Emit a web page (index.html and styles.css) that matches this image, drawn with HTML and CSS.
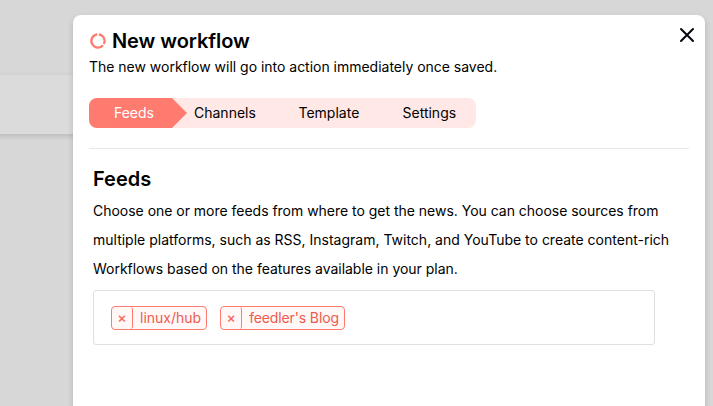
FILE: index.html
```html
<!DOCTYPE html>
<html lang="en">
<head>
<meta charset="utf-8">
<title>New workflow</title>
<link rel="stylesheet" href="styles.css">
</head>
<body>
<div class="backdrop-card"></div>
<main class="modal">
  <button class="close" aria-label="Close"><svg width="16" height="16" viewBox="0 0 16 16"><path d="M2 2l12 12M14 2L2 14"/></svg></button>
  <header class="header">
    <h1 class="title">
      <svg class="ring" width="18" height="18" viewBox="0 0 18 18"><path d="M9.8 2.4A6.6 6.6 0 0 1 14.9 11.9M14 13.2A6.6 6.6 0 1 1 8.2 2.4"/></svg>
      <span>New workflow</span>
    </h1>
    <p class="subtitle">The new workflow will go into action immediately once saved.</p>
  </header>
  <nav class="steps">
    <div class="step step-active">Feeds</div>
    <div class="step step-channels">Channels</div>
    <div class="step step-template">Template</div>
    <div class="step step-settings">Settings</div>
  </nav>
  <hr class="divider">
  <section class="feeds">
    <h2 class="section-title">Feeds</h2>
    <p class="description"><span class="snug">Choose one or more feeds from where to get the news. You can choose sources from</span><br>multiple platforms, such as RSS, Instagram, Twitch, and YouTube to create content-rich<br><span class="snug">Workflows based on the features available in your plan.</span></p>
    <div class="picker">
      <div class="tag"><span class="remove">×</span><span class="label">linux/hub</span></div>
      <div class="tag"><span class="remove">×</span><span class="label label-blog">feedler's Blog</span></div>
    </div>
  </section>
</main>
</body>
</html>
```
FILE: styles.css
```css
* { box-sizing: border-box; }
body {
  margin: 0;
  height: 406px;
  overflow: hidden;
  position: relative;
  background: #d7d7d7;
  color: #000;
  font: 14px/20px Inter, "Liberation Sans", sans-serif;
}
h1, h2, p { margin: 0; }
.backdrop-card {
  position: absolute;
  left: -10px;
  top: 75px;
  width: 100px;
  height: 59px;
  background: #dbdbdb;
  box-shadow: 0 2px 5px rgba(0, 0, 0, .14);
}
.modal {
  position: relative;
  width: 632px;
  height: 391px;
  margin: 15px 0 0 73px;
  padding: 15px 16px 0;
  background: #fff;
  border-radius: 8px 8px 0 0;
  box-shadow: 0 3px 6px rgba(0, 0, 0, .16);
}
.close {
  position: absolute;
  top: 12px;
  right: 10px;
  width: 16px;
  height: 16px;
  padding: 0;
  border: 0;
  background: none;
}
.close svg { display: block; }
.close path { fill: none; stroke: #050510; stroke-width: 2; stroke-linecap: round; }
.title {
  display: flex;
  align-items: center;
  gap: 5px;
  height: 23px;
  font-size: 20px;
  line-height: 23px;
  font-weight: 600;
  letter-spacing: -.07px;
}
.ring { position: relative; top: -.5px; }
.ring path { fill: none; stroke: #ff7b6f; stroke-width: 2.3; }
.subtitle { margin-top: 4px; letter-spacing: -.017px; }
.steps {
  display: flex;
  width: 387px;
  height: 30px;
  margin-top: 21px;
  border-radius: 8px;
  overflow: hidden;
  background: #ffe8e6;
  line-height: 30px;
}
.step-active {
  width: 98px;
  padding-left: 25px;
  background: #ff7b6f;
  color: #fff;
  clip-path: polygon(0 0, 83px 0, 98px 50%, 83px 100%, 0 100%);
}
.step-channels { width: 104px; padding-left: 7px; }
.step-template { width: 104px; padding-left: 7.5px; }
.step-settings { padding-left: 7.5px; }
.divider { height: 1px; margin: 20px 0 0; border: 0; background: #e8e8e8; }
.feeds { padding: 18px 4px 0; }
.section-title { font-size: 20px; line-height: 24px; font-weight: 600; }
.description { margin-top: 5px; line-height: 29px; white-space: nowrap; }
.snug { letter-spacing: -.02px; }
.picker {
  display: flex;
  align-items: center;
  gap: 13px;
  width: 562px;
  height: 55px;
  margin-top: 7px;
  padding: 0 17px;
  border: 1px solid #e0e0e0;
  border-radius: 3px;
}
.tag {
  display: flex;
  height: 24px;
  border: 1px solid #ff7b6f;
  border-radius: 4px;
  background: #fff8f7;
  color: #ee5b50;
  line-height: 22px;
}
.remove {
  width: 21px;
  border-right: 1px solid #ff7b6f;
  border-radius: 0 3px 3px 0;
  text-align: center;
  font-weight: 500;
  color: #f6695e;
}
.label { padding: 0 5px 0 7px; }
.label-blog { letter-spacing: -.13px; }
```
